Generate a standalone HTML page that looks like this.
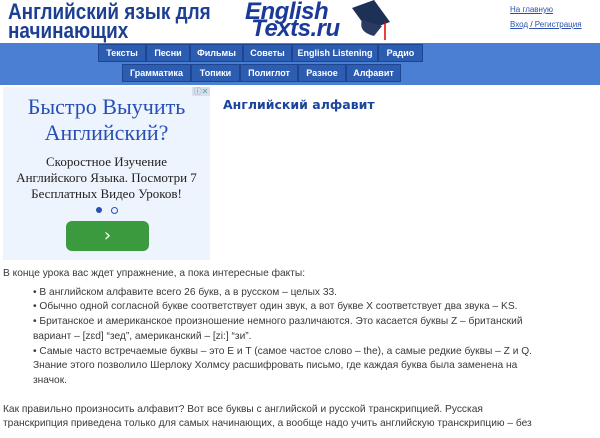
<!DOCTYPE html>
<html><head><meta charset="utf-8"><style>
body{margin:0;width:600px;height:438px;overflow:hidden;background:#fff;font-family:"Liberation Sans",sans-serif;position:relative}
.t{position:absolute;left:8px;top:2px;font:bold 22px/19px "Liberation Sans",sans-serif;color:#1d3f93;letter-spacing:0px;transform:scaleX(0.86);transform-origin:0 0;white-space:nowrap}
.logo{position:absolute;left:245px;top:3px;font:italic bold 24px/17px "Liberation Sans",sans-serif;color:#1a3a9a;letter-spacing:-0.5px}
.lk{position:absolute;left:510px;font-size:8px;color:#2a50b0;text-decoration:underline}
.nav{position:absolute;left:0;top:43px;width:600px;height:42px;background:#4a7fd3}
.row{position:absolute;display:flex;height:18px}
.row div{background:#2d5db0;color:#fff;font:bold 9px/17px "Liberation Sans",sans-serif;text-align:center;border:1px solid #1e4592;box-sizing:border-box}
.ad{position:absolute;left:3px;top:87px;width:207px;height:173px;background:#eef4fd;text-align:center;font-family:"Liberation Serif",serif}
p,li{margin:0}
.txt{position:absolute;left:3px;top:267px;width:596px;font-size:10.2px;line-height:14.7px;color:#3a3a3a;font-family:"Liberation Sans",sans-serif}
ul{margin:4px 0 0;padding-left:30px;list-style:none}
li:before{content:"• ";}
</style></head><body>
<div class="t">Английский язык для<br>начинающих</div>
<div class="logo">English<br>&nbsp;Texts.ru</div>
<svg style="position:absolute;left:348px;top:0" width="44" height="42"><polygon points="4,8 26,0 42,22 20,30" fill="#1d3055"/><path d="M14,20 Q10,32 26,36 L34,26Z" fill="#2a3a60"/><line x1="37" y1="22" x2="37" y2="40" stroke="#d00" stroke-width="1.5"/></svg>
<div class="lk" style="top:5px">На главную</div>
<div class="lk" style="top:20px">Вход <span style="text-decoration:none;color:#333">/</span> Регистрация</div>
<div class="nav">
<div class="row" style="left:98px;top:1px"><div style="width:48px">Тексты</div><div style="width:44px">Песни</div><div style="width:53px">Фильмы</div><div style="width:49px">Советы</div><div style="width:86px">English Listening</div><div style="width:45px">Радио</div></div>
<div class="row" style="left:122px;top:21px"><div style="width:69px">Грамматика</div><div style="width:49px">Топики</div><div style="width:58px">Полиглот</div><div style="width:48px">Разное</div><div style="width:55px">Алфавит</div></div>
</div>
<div class="ad">
<div style="position:absolute;right:0;top:0;width:18px;height:9px;background:#dde;font-size:8px;line-height:9px;color:#4aa">ⓘ✕</div>
<div style="margin-top:7px;font-size:22px;line-height:26px;color:#2750b5">Быстро Выучить<br>Английский?</div>
<div style="margin-top:8px;font-size:13px;line-height:16px;color:#222">Скоростное Изучение<br>Английского Языка. Посмотри 7<br>Бесплатных Видео Уроков!</div>
<div style="position:absolute;left:93px;top:120px;width:6px;height:6px;border-radius:50%;background:#2750b5"></div>
<div style="position:absolute;left:108px;top:120px;width:5px;height:5px;border-radius:50%;border:1px solid #2750b5"></div>
<div style="position:absolute;left:63px;top:134px;width:83px;height:30px;border-radius:6px;background:#3c9a3e;color:#fff;font:18px/30px 'DejaVu Sans',sans-serif">›</div>
</div>
<div style="position:absolute;left:223px;top:97px;font:bold 12.5px 'DejaVu Sans',sans-serif;color:#1c449e">Английский алфавит</div>
<div class="txt">
<p>В конце урока вас ждет упражнение, а пока интересные факты:</p>
<ul>
<li>В английском алфавите всего 26 букв, а в русском – целых 33.</li>
<li>Обычно одной согласной букве соответствует один звук, а вот букве X соответствует два звука – KS.</li>
<li>Британское и американское произношение немного различаются. Это касается буквы Z – британский<br>вариант – [zɛd] “зед”, американский – [zi:] “зи”.</li>
<li>Самые часто встречаемые буквы – это E и T (самое частое слово – the), а самые редкие буквы – Z и Q.<br>Знание этого позволило Шерлоку Холмсу расшифровать письмо, где каждая буква была заменена на<br>значок.</li>
</ul>
<p style="margin-top:14px">Как правильно произносить алфавит? Вот все буквы с английской и русской транскрипцией. Русская<br>транскрипция приведена только для самых начинающих, а вообще надо учить английскую транскрипцию – без</p>
</div>
</body></html>
